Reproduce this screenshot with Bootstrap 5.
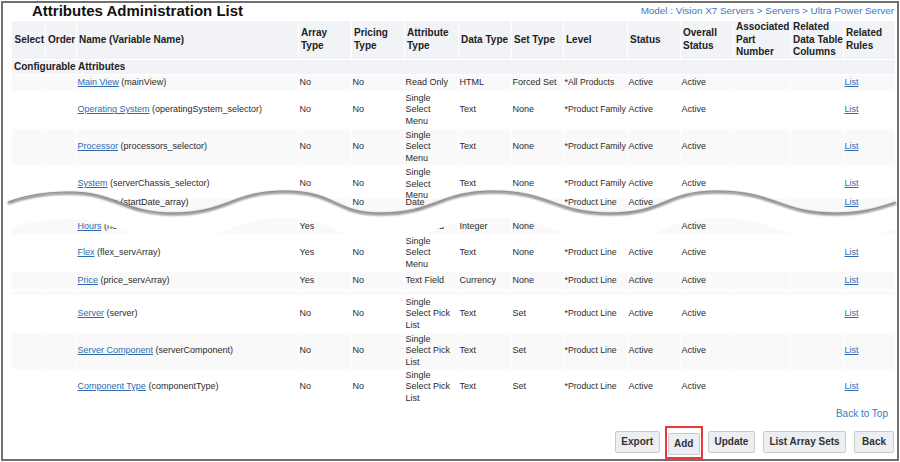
<!DOCTYPE html>
<html>
  <head>
    <link
      href="https://cdn.jsdelivr.net/npm/bootstrap@5.3.3/dist/css/bootstrap.min.css"
      rel="stylesheet"
    />
    <script src="https://cdn.jsdelivr.net/npm/bootstrap@5.3.3/dist/js/bootstrap.bundle.min.js"></script>
    <title>Attributes Administration List</title>
    <style>
      body {
        margin: 0;
        background: #fff;
        font-family: "Liberation Sans", Arial, sans-serif;
        color: #333;
        overflow: hidden;
      }
      .shot {
        width: 900px;
        height: 462px;
      }
      .frame {
        margin: 1px;
        width: 898px;
        height: 460px;
        border: 2px solid #707070;
        padding: 0 1px 0 9px;
      }
      .page-head {
        height: 18px;
        padding-left: 20px;
        padding-right: 2px;
      }
      .page-title {
        font-size: 15px;
        font-weight: 700;
        line-height: 15px;
        margin: 0;
        color: #111;
      }
      .crumb {
        font-size: 9.9px;
        line-height: 15px;
        color: #3b78c0;
      }
      .table.attr-table {
        table-layout: fixed;
        width: 883px;
        font-size: 9px;
        line-height: 11.5px;
        margin: 0;
        color: #2b2b2b;
      }
      .table.attr-table th,
      .table.attr-table td {
        padding: 0 0 0 1px;
        border: 0;
        border-right: 1px solid #fff;
        vertical-align: middle;
        background: #fff;
        box-shadow: none;
        color: #2b2b2b;
      }
      .table.attr-table thead th {
        background: #f1f3f7;
        font-size: 10px;
        line-height: 12.3px;
        padding: 0 0 0 2.5px;
        height: 38px;
        border-bottom: 1px solid #fff;
        color: #222;
        white-space: nowrap;
      }
      .table.attr-table .section-row td {
        background: #f1f3f7;
        font-size: 10px;
        font-weight: 700;
        height: 15px;
        border-bottom: 1px solid #fff;
        padding-left: 2px;
        border-right: 0;
        color: #222;
      }
      .table.attr-table .tint td {
        background: #f9f9f9;
      }
      .table.attr-table a {
        color: #2d6cb0;
      }
      .table.attr-table .level-cell {
        font-size: 8.7px;
        white-space: nowrap;
      }
      .table.attr-table .h17 td { height: 17px; }
      .table.attr-table .h36 td { height: 36px; }
      .table.attr-table .h38 td { height: 38px; }
      .table.attr-table .h15 td { height: 15px; }
      .table.attr-table .spacer-gap td {
        height: 2px;
        line-height: 2px;
        font-size: 1px;
      }
      .table.attr-table .spacer-row td {
        height: 4px;
        line-height: 4px;
        font-size: 1px;
      }
      /* the picture is spliced here: rows run into each other */
      .table.attr-table .cut-top td {
        height: 34px;
        padding-top: 4px;
      }
      .cut-cell {
        margin: -2px 0 -2.5px;
      }
      .table.attr-table .cut-under td {
        height: 20px;
        line-height: 7px;
        vertical-align: top;
      }
      .top-link {
        font-size: 10px;
        line-height: 12px;
        color: #3b78c0;
        text-decoration: none;
        margin-top: 3px;
        padding-right: 8px;
      }
      .foot-btns {
        margin-top: 11px;
        padding-right: 2px;
      }
      .btn.foot-btn {
        height: 22px;
        padding: 0 5.5px;
        font-size: 10px;
        font-weight: 700;
        line-height: 20px;
        color: #333;
        background: #eceef1;
        border: 1px solid #c9cbce;
        border-radius: 2px;
      }
      .btn.foot-btn.wide-pad {
        padding: 0 7px;
      }
      .red-box {
        top: -5px;
        bottom: -4px;
        left: -3px;
        right: -3px;
        border: 2px solid #e8393b;
      }
      .tear {
        top: 0;
        left: 0;
        pointer-events: none;
      }
    </style>
  </head>
  <body>
    <div class="shot position-relative">
      <div class="frame">
        <div class="page-head d-flex justify-content-between">
          <h1 class="page-title">Attributes Administration List</h1>
          <div class="crumb">Model : Vision X7 Servers &gt; Servers &gt; Ultra Power Server</div>
        </div>
        <table class="table attr-table">
          <colgroup>
            <col width="33" /><col width="31" /><col width="222" /><col width="53" /><col width="53" /><col width="54" /><col width="53" />
            <col width="52" /><col width="64" /><col width="53" /><col width="53" /><col width="57" /><col width="53" /><col width="52" />
          </colgroup>
          <thead>
            <tr>
              <th>Select</th>
              <th>Order</th>
              <th>Name (Variable Name)</th>
              <th>Array<br />Type</th>
              <th>Pricing<br />Type</th>
              <th>Attribute<br />Type</th>
              <th>Data Type</th>
              <th>Set Type</th>
              <th>Level</th>
              <th>Status</th>
              <th>Overall<br />Status</th>
              <th>Associated<br />Part<br />Number</th>
              <th>Related<br />Data Table<br />Columns</th>
              <th>Related<br />Rules</th>
            </tr>
          </thead>
          <tbody id="rows"></tbody>
        </table>
        <div class="d-flex justify-content-end">
          <a class="top-link" href="#">Back to Top</a>
        </div>
        <div class="foot-btns d-flex justify-content-end gap-2">
          <button type="button" class="btn foot-btn">Export</button>
          <span class="position-relative d-inline-block">
            <button type="button" class="btn foot-btn">Add</button>
            <span class="red-box position-absolute"></span>
          </span>
          <button type="button" class="btn foot-btn">Update</button>
          <button type="button" class="btn foot-btn">List Array Sets</button>
          <button type="button" class="btn foot-btn wide-pad">Back</button>
        </div>
      </div>

      <svg class="tear position-absolute" width="900" height="462" viewBox="0 0 900 462">
        <defs>
          <filter id="soft" x="-2%" y="-30%" width="104%" height="160%"><feGaussianBlur stdDeviation="0.8" /></filter>
          <filter id="softer" x="-2%" y="-30%" width="104%" height="160%"><feGaussianBlur stdDeviation="0.6" /></filter>
        </defs>
        <path
          fill="#fff"
          filter="url(#softer)"
          d="M3 203 L8 201 C30 193 50 191 70 191 C115 191 125 212 172 212 C228 212 232 190 285 190 C335 190 335 212 380 212 C435 212 440 190 493 190 C550 190 555 212 610 212 C665 212 665 190 717 190 C775 190 780 212 835 212 C865 212 880 206 896 201 L896 228 C880 233 865 239 835 239 C780 239 775 217 717 217 C665 217 665 239 610 239 C555 239 550 217 493 217 C440 217 435 239 380 239 C335 239 335 217 285 217 C232 217 228 239 172 239 C125 239 115 218 70 218 C50 218 30 220 8 228 L3 230 Z"
        />
        <path
          fill="none"
          stroke="#666"
          stroke-width="2"
          filter="url(#soft)"
          transform="translate(0 1.2)"
          d="M8 201 C30 193 50 191 70 191 C115 191 125 212 172 212 C228 212 232 190 285 190 C335 190 335 212 380 212 C435 212 440 190 493 190 C550 190 555 212 610 212 C665 212 665 190 717 190 C775 190 780 212 835 212 C865 212 880 206 896 201"
        />
        <path
          fill="none"
          stroke="#7d7d7d"
          stroke-width="0.8"
          d="M8 201 C30 193 50 191 70 191 C115 191 125 212 172 212 C228 212 232 190 285 190 C335 190 335 212 380 212 C435 212 440 190 493 190 C550 190 555 212 610 212 C665 212 665 190 717 190 C775 190 780 212 835 212 C865 212 880 206 896 201"
        />
      </svg>
    </div>

    <script>
      const selectMenu = "Single<br>Select<br>Menu";
      const pickList = "Single<br>Select Pick<br>List";
      const family = "*Product Family";
      const line = "*Product Line";

      // name, variable, array, pricing, attribute type, data type, set type, level, row classes
      const attributes = [
        ["Main View", "mainView", "No", "No", "Read Only", "HTML", "Forced Set", "*All Products", "tint h17"],
        ["Operating System", "operatingSystem_selector", "No", "No", selectMenu, "Text", "None", family, "h38"],
        ["Processor", "processors_selector", "No", "No", selectMenu, "Text", "None", family, "tint h36"],
        ["System", "serverChassis_selector", "No", "No", '<div class="cut-cell">' + selectMenu + "</div>", "Text", "None", family, "cut-top"],
        ["Start Date", "startDate_array", "No", "No", "Date", "Date", "None", line, "tint cut-under"],
        ["Hours", "hours_servArray", "Yes", "No", "Text Field", "Integer", "None", line, "tint h15"],
        ["Flex", "flex_servArray", "Yes", "No", selectMenu, "Text", "None", line, "h38"],
        ["Price", "price_servArray", "Yes", "No", "Text Field", "Currency", "None", line, "tint h17"],
        null,
        ["Server", "server", "No", "No", pickList, "Text", "Set", line, "h38"],
        ["Server Component", "serverComponent", "No", "No", pickList, "Text", "Set", line, "tint h36"],
        ["Component Type", "componentType", "No", "No", pickList, "Text", "Set", line, "h36"],
      ];

      let content = `<tr class="section-row"><td colspan="14">Configurable Attributes</td></tr>`;
      for (let a of attributes) {
        if (a === null) {
          content += `<tr class="spacer-gap"><td colspan="14"></td></tr>`;
          content += `<tr class="spacer-row tint">` + "<td></td>".repeat(14) + `</tr>`;
          continue;
        }
        content += `<tr class="${a[8]}">
            <td></td>
            <td></td>
            <td><a href="#">${a[0]}</a> (${a[1]})</td>
            <td>${a[2]}</td>
            <td>${a[3]}</td>
            <td>${a[4]}</td>
            <td>${a[5]}</td>
            <td>${a[6]}</td>
            <td class="level-cell">${a[7]}</td>
            <td>Active</td>
            <td>Active</td>
            <td></td>
            <td></td>
            <td><a href="#">List</a></td>
          </tr>`;
      }
      document.getElementById("rows").innerHTML = content;
    </script>
  </body>
</html>
